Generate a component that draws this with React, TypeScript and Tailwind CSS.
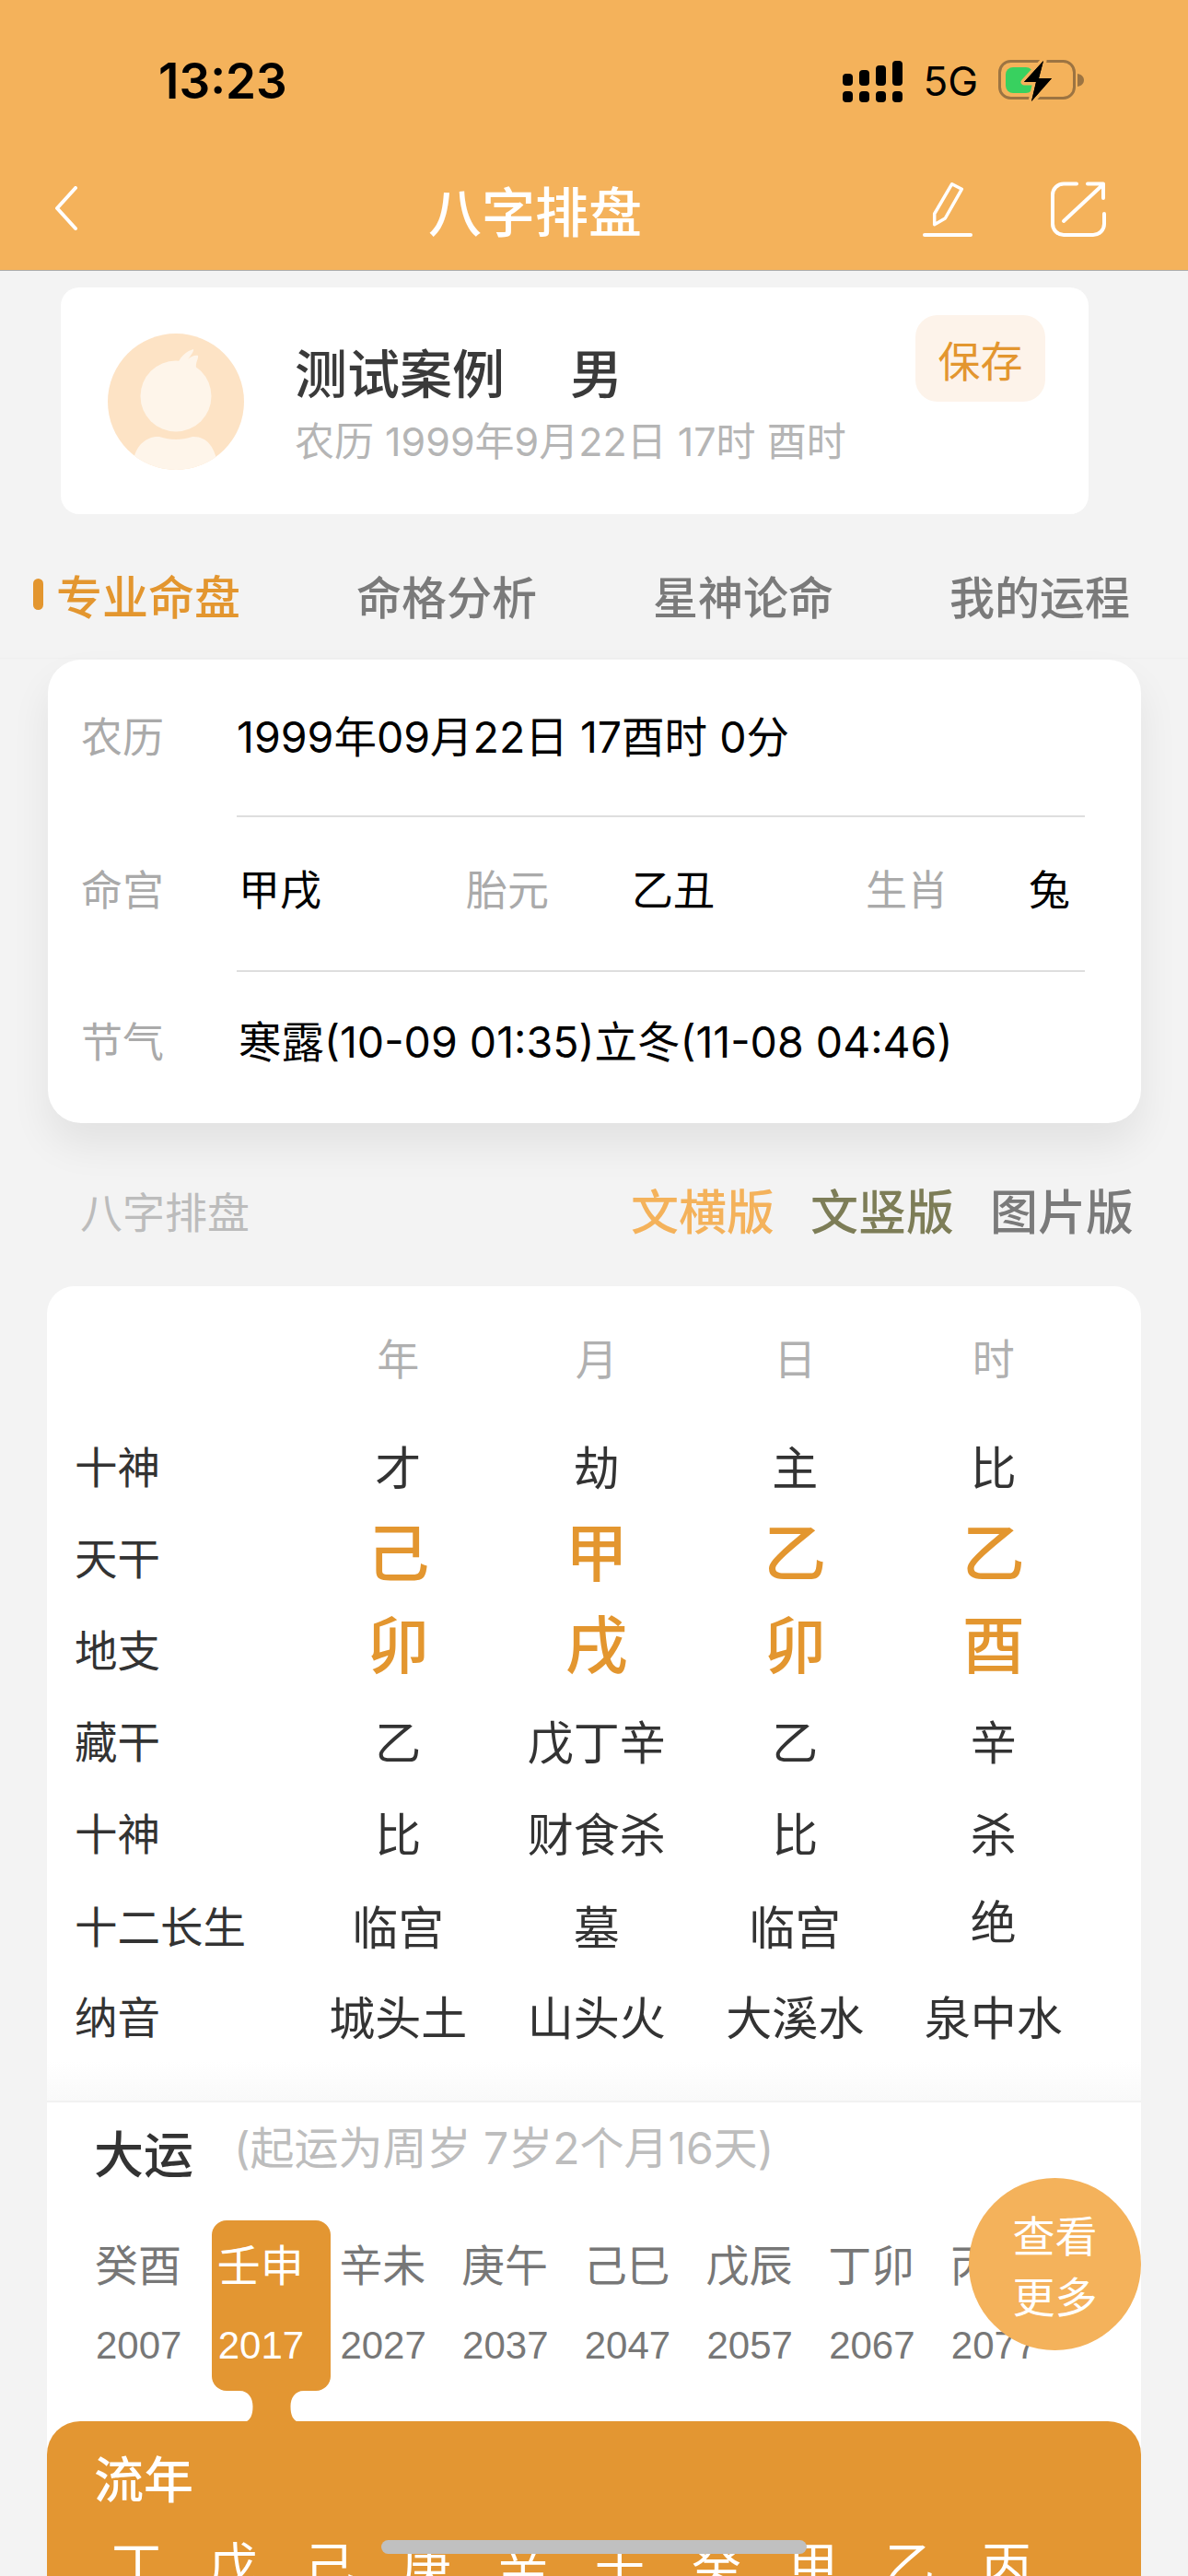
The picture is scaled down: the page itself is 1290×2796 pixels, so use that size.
const font = { fontFamily: '"Noto Sans CJK SC", "Noto Sans", sans-serif' };
const latinFont = { fontFamily: 'Inter, "Noto Sans CJK SC", sans-serif' };
const helvFont = { fontFamily: '"Liberation Sans", "Noto Sans CJK SC", sans-serif' };

const pillars = [
  { label: "十神", values: ["才", "劫", "主", "比"] },
  { label: "天干", values: ["己", "甲", "乙", "乙"], accent: true },
  { label: "地支", values: ["卯", "戌", "卯", "酉"], accent: true },
  { label: "藏干", values: ["乙", "戊丁辛", "乙", "辛"] },
  { label: "十神", values: ["比", "财食杀", "比", "杀"] },
  { label: "十二长生", values: ["临宫", "墓", "临宫", "绝"], low: true },
  { label: "纳音", values: ["城头土", "山头火", "大溪水", "泉中水"] },
];

const dayun = [
  ["癸酉", "2007"],
  ["壬申", "2017"],
  ["辛未", "2027"],
  ["庚午", "2037"],
  ["己巳", "2047"],
  ["戊辰", "2057"],
  ["丁卯", "2067"],
  ["丙寅", "2077"],
];

const liunian = ["丁", "戊", "己", "庚", "辛", "壬", "癸", "甲", "乙", "丙"];

function StatusIcons() {
  return (
    <div className="flex items-center">
      <svg width="65" height="45" viewBox="0 0 65 45" fill="#000">
        <rect x="0" y="14" width="11" height="13" rx="4" />
        <rect x="18" y="10" width="11" height="17" rx="4" />
        <rect x="36" y="5" width="11" height="22" rx="4" />
        <rect x="54" y="0" width="11" height="27" rx="4" />
        <rect x="0" y="33" width="11" height="12" rx="4" />
        <rect x="18" y="33" width="11" height="12" rx="4" />
        <rect x="36" y="33" width="11" height="12" rx="4" />
        <rect x="54" y="33" width="11" height="12" rx="4" />
      </svg>
      <span className="ml-[22px] text-[44px] leading-none text-black" style={{ fontFamily: "Inter, sans-serif" }}>5G</span>
      <svg className="ml-[22px]" width="94" height="50" viewBox="0 0 94 50">
        <rect x="1.5" y="3.5" width="81" height="40" rx="12" fill="none" stroke="#9c7442" strokeWidth="3" />
        <path d="M86 17 C91 18 93 21 93 24 C93 27 91 30 86 31 Z" fill="#9c7442" />
        <rect x="8" y="10" width="30" height="28" rx="8" fill="#38d15f" />
        <path d="M49 3 L28 26 H41 L36 47 L58 22 H44 Z" fill="#000" stroke="#f4b25b" strokeWidth="7" paintOrder="stroke" strokeLinejoin="round" />
        <path d="M49 3 L28 26 H41 L36 47 L58 22 H44 Z" fill="#000" />
      </svg>
    </div>
  );
}

function Avatar() {
  return (
    <svg width="148" height="148" viewBox="0 0 148 148" className="shrink-0">
      <defs>
        <clipPath id="face">
          <circle cx="74" cy="74" r="74" />
        </clipPath>
      </defs>
      <circle cx="74" cy="74" r="74" fill="#fde3c5" />
      <g clipPath="url(#face)" fill="#fef5ea">
        <circle cx="74" cy="68" r="38.5" />
        <path d="M76 32 C80 24 86 19 93 17 C94 19 90 24 87 28 C90 25 95 23 98 24 C99 27 95 31 96 38 Z" />
        <path d="M28 138 C30 122 42 111 56 112 C68 116 80 116 92 112 C106 111 118 122 120 148 H28 Z" />
      </g>
    </svg>
  );
}

function cellClass(row: { accent?: boolean; low?: boolean }, value: string) {
  if (row.accent) return "flex h-[99.5px] items-center justify-center pb-[14px] text-[68px] font-medium leading-none text-[#e3962f]";
  if (value === "绝") return "flex h-[99.5px] items-center justify-center pb-[8px] text-[50px] leading-none text-[#333333]";
  if (row.low) return "flex h-[99.5px] items-center justify-center pt-[4px] text-[50px] leading-none text-[#333333]";
  return "flex h-[99.5px] items-center justify-center text-[50px] leading-none text-[#333333]";
}

export default function App() {
  return (
    <div className="relative h-[2796px] w-[1290px] overflow-hidden bg-[#f3f3f3]" style={font}>
      {/* top bar */}
      <div className="h-[294px] border-b border-[#ababab] bg-[#f4b25b]">
        <div className="flex h-[176px] items-center justify-between pl-[172px] pr-[112px]">
          <span className="text-[53px] font-semibold leading-none text-black" style={{ fontFamily: "Inter, sans-serif" }}>13:23</span>
          <StatusIcons />
        </div>
        <div className="flex h-[102px] items-center pl-[58px] pr-[89px]">
          <svg width="28" height="50" viewBox="0 0 28 50" fill="none" stroke="#fff" strokeWidth="4" strokeLinecap="round" strokeLinejoin="round">
            <path d="M24 2 L4 24 L24 46" />
          </svg>
          <span className="ml-[379px] text-[58px] font-medium leading-none text-white">八字排盘</span>
          <svg className="ml-auto" width="54" height="60" viewBox="0 0 54 60" fill="none" stroke="#fff" strokeWidth="3.5" strokeLinecap="round" strokeLinejoin="round">
            <path d="M12.7 35 L31.7 2.7 L42.3 8.3 L24.3 40 L12.7 46.7 Z" />
            <path d="M2 58 H52" strokeWidth="4" />
          </svg>
          <svg className="ml-[85px]" width="60" height="60" viewBox="0 0 60 60" fill="none" stroke="#fff" strokeWidth="4" strokeLinecap="round" strokeLinejoin="round">
            <path d="M28 2.5 H14 A12 12 0 0 0 2 14.5 V46 A12 12 0 0 0 14 58 H46 A12 12 0 0 0 58 46 V35" />
            <path d="M14 43 L57 3 M40 2.5 H57 V18" />
          </svg>
        </div>
      </div>

      {/* profile */}
      <div className="ml-[66px] mt-[18px] flex h-[246px] w-[1116px] rounded-[20px] bg-white pl-[51px] pr-[47px] pt-[50px]">
        <Avatar />
        <div className="ml-[55px] flex-1">
          <div className="mt-[10px] flex h-[60px] items-center text-[57px] font-medium leading-none text-[#3a3a3a]">
            <span>测试案例</span>
            <span className="ml-[71px]">男</span>
          </div>
          <div className="mt-[22px] text-[43px] leading-[50px] text-[#b5b5b5]" style={latinFont}>农历 1999年9月22日 17时 酉时</div>
        </div>
        <div className="-mt-[20px] flex h-[94px] w-[141px] items-center justify-center rounded-[24px] bg-[#fdf3ea] text-[46px] leading-none text-[#e3962f]">保存</div>
      </div>

      {/* tabs */}
      <div className="flex h-[157px] items-center gap-[126px] border-b border-[#efefef] pl-[36px] pt-[18px] text-[49px] font-medium leading-none text-[#7a7a7a]">
        <div className="flex items-center gap-[14px] text-[#e3962f]">
          <span className="h-[34px] w-[11px] rounded-full bg-[#e3962f]" />
          <span className="text-[50px]">专业命盘</span>
        </div>
        <span>命格分析</span>
        <span>星神论命</span>
        <span>我的运程</span>
      </div>

      {/* basic info */}
      <div className="ml-[52px] mt-px h-[503px] w-[1187px] rounded-[36px] bg-white shadow-[0_24px_44px_rgba(0,0,0,0.07)]">
        <div className="flex h-[169px] items-center pb-[1px] pl-[36px] text-[45px] leading-none" style={latinFont}>
          <span className="w-[169px] text-[#aaaaaa]">农历</span>
          <span className="text-[46.5px] text-black">1999年09月22日 17酉时 0分</span>
        </div>
        <div className="ml-[205px] mr-[61px] h-[2px] bg-[#dedede]" />
        <div className="flex h-[166px] items-center pb-[14px] pl-[36px] text-[45px] leading-none">
          <span className="w-[171px] text-[#aaaaaa]">命宫</span>
          <span className="w-[247px] text-black">甲戌</span>
          <span className="w-[180px] text-[#aaaaaa]">胎元</span>
          <span className="w-[254px] text-black">乙丑</span>
          <span className="w-[177px] text-[#aaaaaa]">生肖</span>
          <span className="text-black">兔</span>
        </div>
        <div className="ml-[205px] mr-[61px] h-[2px] bg-[#dedede]" />
        <div className="flex h-[164px] items-center pb-[12px] pl-[36px] text-[45px] leading-none" style={latinFont}>
          <span className="w-[171px] text-[#aaaaaa]">节气</span>
          <span className="text-[46.5px] text-black">寒露(10-09 01:35)立冬(11-08 04:46)</span>
        </div>
      </div>

      {/* section head */}
      <div className="flex h-[177px] items-center justify-between pl-[87px] pr-[59px] pt-[11px]">
        <span className="text-[46px] leading-none text-[#bcbcbc]">八字排盘</span>
        <div className="flex gap-[39px] text-[52px] font-medium leading-none">
          <span className="text-[#f4b25b]">文横版</span>
          <span className="text-[#7d7d57]">文竖版</span>
          <span className="text-[#7a7a7a]">图片版</span>
        </div>
      </div>

      {/* chart card */}
      <div className="ml-[51px] w-[1188px] rounded-t-[30px] bg-white">
        <div className="grid grid-cols-[243.5px_repeat(4,215.5px)] pl-[30px] pt-[28px]">
          <div className="h-[116px]" />
          {["年", "月", "日", "时"].map((h) => (
            <div key={h} className="flex h-[116px] justify-center pt-[23px] text-[46px] leading-[50px] text-[#b0b0b0]">{h}</div>
          ))}
          {pillars.map((row, r) => (
            <div key={r} className="contents">
              <div className={row.low ? "flex h-[99.5px] items-center pt-[4px] text-[46.5px] leading-none text-[#333333]" : "flex h-[99.5px] items-center text-[46.5px] leading-none text-[#333333]"}>{row.label}</div>
              {row.values.map((v, i) => (
                <div key={i} className={cellClass(row, v)}>
                  {v}
                </div>
              ))}
            </div>
          ))}
        </div>
        <div className="h-[45px] border-b-2 border-[#f1f1f1] bg-gradient-to-b from-white to-[#f9f9f9]" />

        {/* da yun */}
        <div className="relative h-[346px]">
          <div className="flex h-[112px] items-center pb-[4px] pl-[51px]">
            <span className="text-[54px] font-medium leading-none text-[#333333]">大运</span>
            <span className="-mt-[8px] ml-[44px] text-[48px] leading-none text-[#bdbdbd]" style={latinFont}>(起运为周岁 7岁2个月16天)</span>
          </div>
          <div className="mt-[16px] flex pl-[46px]">
            {dayun.map(([gz, year], i) => (
              <div key={year} className="w-[132.7px] shrink-0">
                <div className={i === 1 ? "relative h-[185px] w-[129px] rounded-[16px] bg-[#e39632] pl-[7px] pt-[21px] text-white" : "h-[185px] w-[129px] pl-[7px] pt-[21px] text-[#777777]"}>
                  <div className="-ml-px text-[47px] leading-[50px]">{gz}</div>
                  <div className="mt-[40px] text-[42px] leading-[50px]" style={helvFont}>{year}</div>
                  {i === 1 && (
                    <svg className="absolute left-[24px] top-[185px]" width="82" height="34" viewBox="0 0 82 34" fill="#e39632">
                      <path d="M6 0 C16 0 20.5 8 20.5 17 C20.5 26 18 32 12 34 H70 C64 32 61.5 26 61.5 17 C61.5 8 66 0 76 0 Z" />
                    </svg>
                  )}
                </div>
              </div>
            ))}
          </div>
          <div className="absolute right-0 top-[82px] flex h-[187px] w-[187px] flex-col items-center justify-center rounded-full bg-[#f4b25b] text-[46px] leading-[66px] text-white">
            <span>查看</span>
            <span>更多</span>
          </div>
        </div>

        {/* liu nian */}
        <div className="h-[300px] rounded-[36px] bg-[#e39632] pt-[34px] text-white">
          <div className="pl-[51px] text-[54px] font-medium leading-none">流年</div>
          <div className="mt-[39px] flex pl-[44.5px]">
            {liunian.map((g) => (
              <span key={g} className="w-[105px] text-center text-[54px] leading-none">{g}</span>
            ))}
          </div>
        </div>
      </div>

      <div className="absolute left-[414px] top-[2757px] h-[15px] w-[462px] rounded-full bg-[#c0c0c0]" />
    </div>
  );
}
